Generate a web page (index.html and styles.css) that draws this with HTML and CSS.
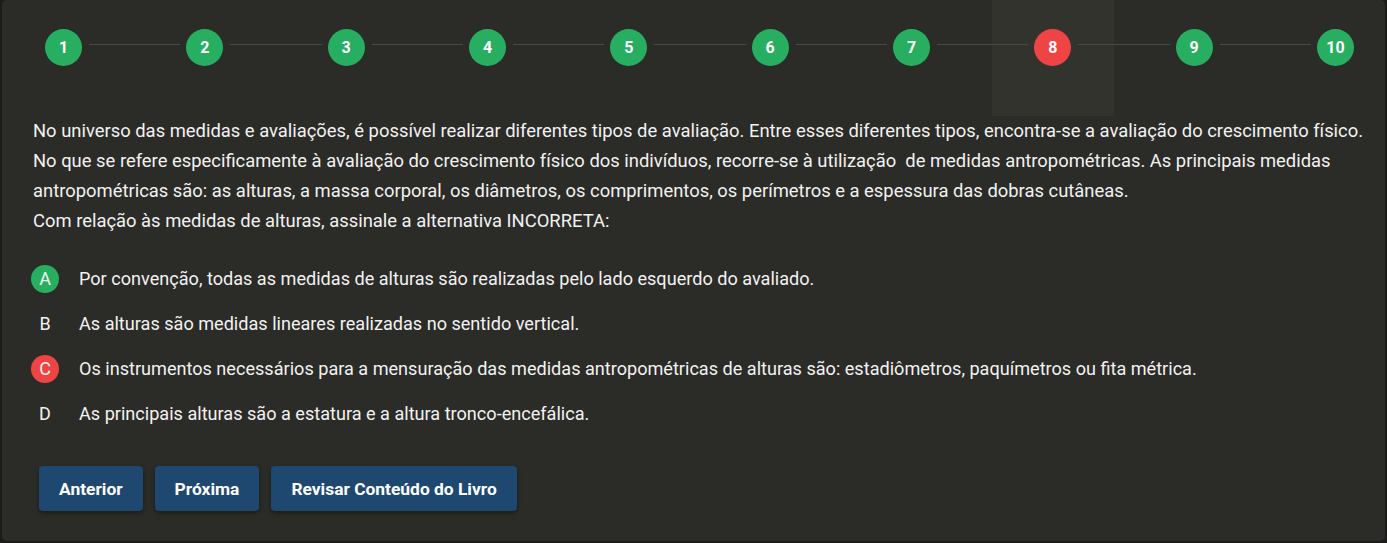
FILE: index.html
```html
<!DOCTYPE html>
<html lang="pt">
<head>
<meta charset="utf-8">
<link rel="stylesheet" href="styles.css">
</head>
<body>
<div class="card">
  <div class="stepper">
    <div class="step done">1</div><div class="line"></div>
    <div class="step done">2</div><div class="line"></div>
    <div class="step done">3</div><div class="line"></div>
    <div class="step done">4</div><div class="line"></div>
    <div class="step done">5</div><div class="line"></div>
    <div class="step done">6</div><div class="line"></div>
    <div class="step done">7</div><div class="line"></div>
    <div class="step wrong current">8</div><div class="line"></div>
    <div class="step done">9</div><div class="line"></div>
    <div class="step done">10</div>
  </div>
  <p class="question">No universo das medidas e avaliações, é possível realizar diferentes tipos de avaliação. Entre esses diferentes tipos, encontra-se a avaliação do crescimento físico.<br>No que se refere especificamente à avaliação do crescimento físico dos indivíduos, recorre-se à utilização&nbsp; de medidas antropométricas. As principais medidas antropométricas são: as alturas, a massa corporal, os diâmetros, os comprimentos, os perímetros e a espessura das dobras cutâneas.<br>Com relação às medidas de alturas, assinale a alternativa INCORRETA:</p>
  <ul class="options">
    <li class="option"><span class="letter correct">A</span><span class="text">Por convenção, todas as medidas de alturas são realizadas pelo lado esquerdo do avaliado.</span></li>
    <li class="option"><span class="letter">B</span><span class="text">As alturas são medidas lineares realizadas no sentido vertical.</span></li>
    <li class="option"><span class="letter incorrect">C</span><span class="text">Os instrumentos necessários para a mensuração das medidas antropométricas de alturas são: estadiômetros, paquímetros ou fita métrica.</span></li>
    <li class="option"><span class="letter">D</span><span class="text">As principais alturas são a estatura e a altura tronco-encefálica.</span></li>
  </ul>
  <div class="actions">
    <button class="btn">Anterior</button>
    <button class="btn">Próxima</button>
    <button class="btn">Revisar Conteúdo do Livro</button>
  </div>
</div>
</body>
</html>
```
FILE: styles.css
```css
html, body {
  margin: 0;
  padding: 0;
  background: #1c1c1a;
}
body {
  font-family: Roboto, "Liberation Sans", sans-serif;
  color: #f2f2f2;
}
.card {
  position: relative;
  z-index: 0;
  margin-left: 2px;
  width: 1383px;
  height: 541px;
  background: #2b2b27;
  border-radius: 5px;
  box-sizing: border-box;
  overflow: hidden;
}
.stepper {
  display: flex;
  align-items: flex-start;
  height: 116px;
  padding: 29px 31px 0 43px;
  box-sizing: border-box;
}
.step {
  position: relative;
  width: 37px;
  height: 37px;
  flex: 0 0 37px;
  border-radius: 50%;
  display: flex;
  align-items: center;
  justify-content: center;
  font-weight: 700;
  font-size: 16px;
  color: #fff;
}
.step.done { background: #27ae60; }
.step.wrong { background: #ef4444; }
.step.current::before {
  content: "";
  position: absolute;
  left: -42px;
  top: -29px;
  width: 122px;
  height: 116px;
  background: #33332e;
  z-index: -1;
}
.line {
  flex: 1;
  height: 1px;
  margin: 15px 6px 0 7px;
  background: #4a4a45;
  position: relative;
}
.question {
  margin: 0;
  padding: 0 10px 0 31px;
  font-size: 18.4px;
  line-height: 30px;
}
.options {
  list-style: none;
  margin: 20px 0 0;
  padding: 0 0 0 29px;
}
.option {
  display: flex;
  align-items: center;
  height: 45px;
  font-size: 18.1px;
}
.letter {
  width: 28px;
  height: 28px;
  border-radius: 50%;
  display: flex;
  align-items: center;
  justify-content: center;
  margin-right: 20px;
  font-size: 18px;
}
.letter.correct { background: #27ae60; }
.letter.incorrect { background: #ef4444; }
.actions {
  display: flex;
  gap: 12px;
  margin-top: 30px;
  padding-left: 37px;
}
.btn {
  height: 45px;
  padding: 0 20px;
  border: none;
  border-radius: 4px;
  background: #1f4870;
  color: #fff;
  font-family: Roboto, "Liberation Sans", sans-serif;
  font-weight: 700;
  font-size: 17.4px;
  box-shadow: 0 2px 4px rgba(0,0,0,0.4);
}
```
